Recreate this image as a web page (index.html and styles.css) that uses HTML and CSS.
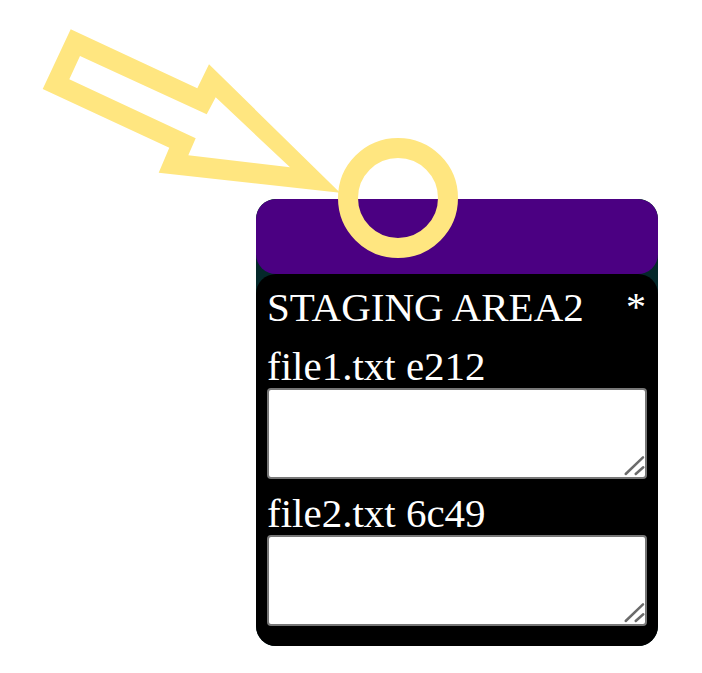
FILE: index.html
```html
<!DOCTYPE html>
<html>
<head>
<meta charset="utf-8">
<link rel="stylesheet" href="styles.css">
</head>
<body>
<div class="stage">
  <div class="card">
    <div class="card-head"></div>
    <div class="card-body">
      <div class="title-row">
        <span class="title">STAGING AREA2</span>
        <span class="star">*</span>
      </div>
      <div class="file">
        <div class="file-label">file1.txt e212</div>
        <div class="field">
          <textarea class="file-text"></textarea>
          <svg class="grip" width="24" height="24" viewBox="0 0 24 24"><path d="M2.7 19 L20 2.3 M12.7 19 L20.3 12.3"/></svg>
        </div>
      </div>
      <div class="file file-next">
        <div class="file-label">file2.txt 6c49</div>
        <div class="field">
          <textarea class="file-text"></textarea>
          <svg class="grip" width="24" height="24" viewBox="0 0 24 24"><path d="M2.7 19 L20 2.3 M12.7 19 L20.3 12.3"/></svg>
        </div>
      </div>
    </div>
  </div>
</div>
<svg class="overlay" width="702" height="673" viewBox="0 0 702 673">
  <path class="pointer" fill-rule="evenodd" d="M70.7 29.3 L197.3 88.3 L209 64.3 L340 192.7 L158.7 172.7 L169.3 147.7 L42.7 89 Z M80 56 L69.3 79.3 L195.7 138.3 L188.3 155.3 L290 167.3 L215.7 97.3 L206.7 114.3 Z"/>
  <circle class="ring" cx="398" cy="198" r="50"/>
</svg>
</body>
</html>
```
FILE: styles.css
```css
html, body {
  margin: 0;
  padding: 0;
  background: #ffffff;
}
body {
  width: 702px;
  height: 673px;
  position: relative;
  overflow: hidden;
  font-family: "Liberation Serif", "Times New Roman", serif;
}
.stage {
  padding: 195px 0 0 252px;
}
.card {
  box-sizing: border-box;
  width: 410px;
  border: 4px solid #ffffff;
  border-radius: 24px;
  background: #04282a;
  overflow: hidden;
  display: flex;
  flex-direction: column;
}
.card-head {
  height: 75px;
  background: #4b0082;
  border-radius: 20px;
}
.card-body {
  background: #000000;
  border-radius: 20px 20px 0 0;
  padding: 11px 12px 20px 11px;
  color: #ffffff;
  display: flex;
  flex-direction: column;
}
.title-row {
  display: flex;
  justify-content: space-between;
  align-items: flex-start;
  font-size: 41px;
  line-height: 44px;
  margin-bottom: 15px;
}
.star {
  font-size: 40px;
  line-height: 44px;
}
.file {
  display: flex;
  flex-direction: column;
}
.file-next {
  margin-top: 12px;
}
.file-label {
  font-size: 41px;
  line-height: 44px;
}
.field {
  position: relative;
  width: 380px;
  height: 91px;
}
.file-text {
  display: block;
  box-sizing: border-box;
  width: 380px;
  height: 91px;
  margin: 0;
  border: 2px solid #777777;
  border-radius: 4px;
  background: #ffffff;
  resize: none;
}
.grip {
  position: absolute;
  right: 0;
  bottom: 0;
}
.grip path {
  fill: none;
  stroke: #6b6b6b;
  stroke-width: 2.5;
  stroke-linecap: round;
}
.overlay {
  position: absolute;
  left: 0;
  top: 0;
  pointer-events: none;
}
.pointer {
  fill: #ffe680;
}
.ring {
  fill: none;
  stroke: #ffe680;
  stroke-width: 20;
}
```
